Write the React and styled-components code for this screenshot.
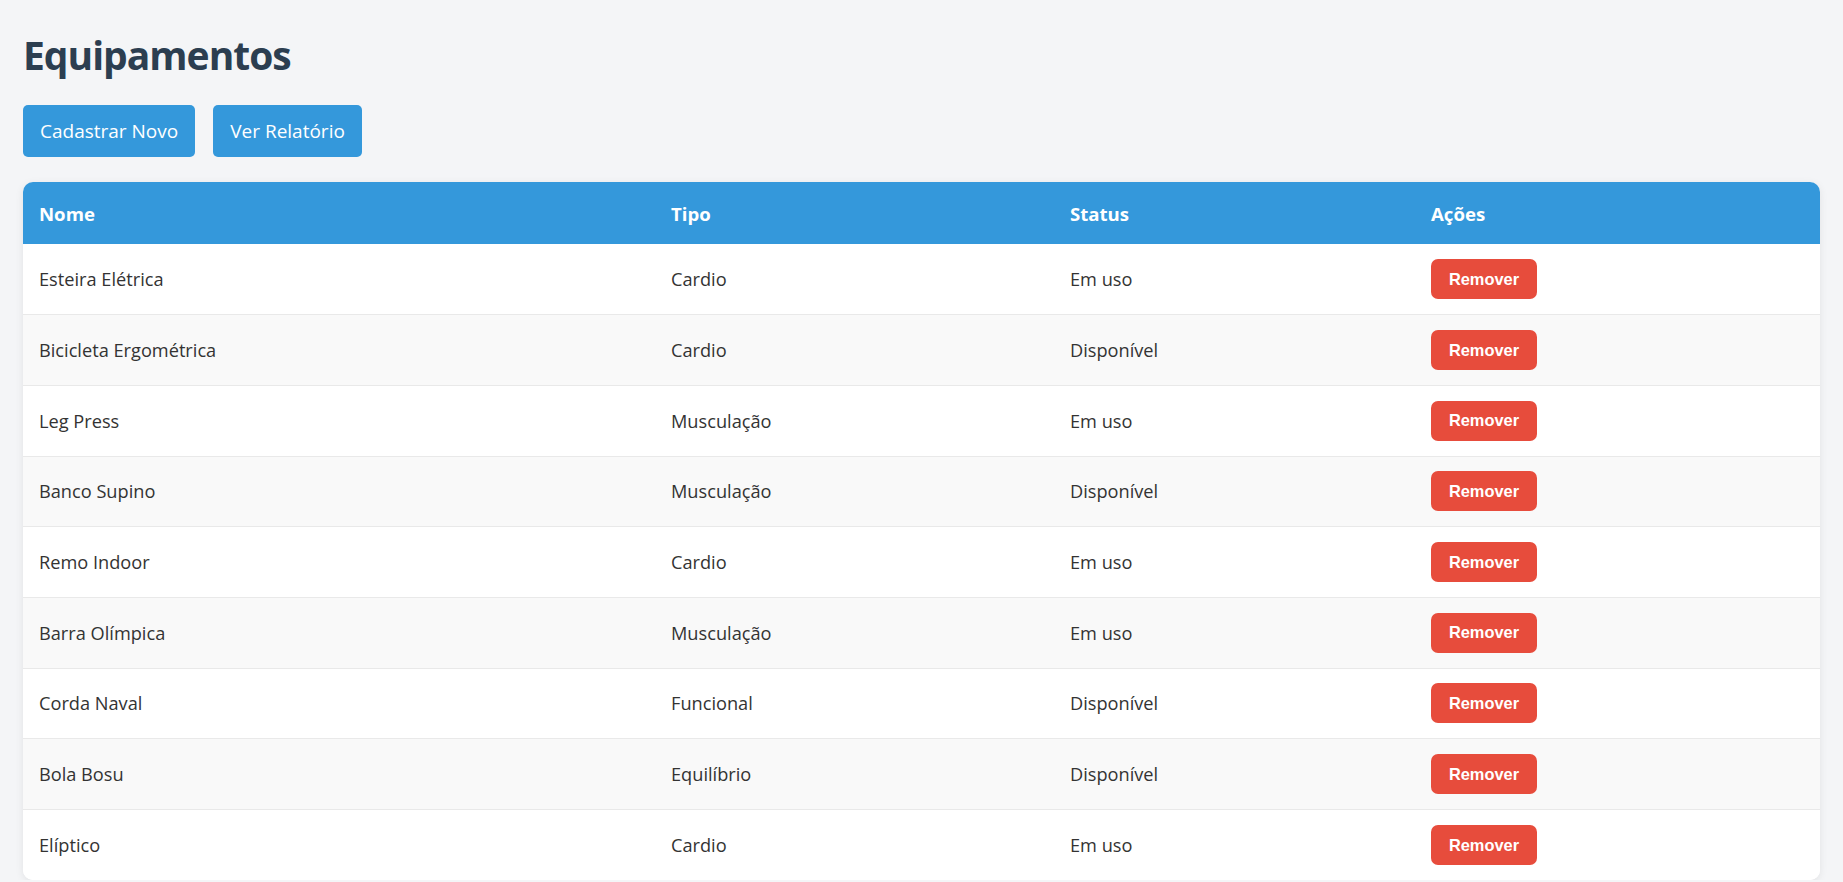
import React from "react";
import styled, { createGlobalStyle } from "styled-components";

const GlobalStyle = createGlobalStyle`
  html, body { margin: 0; padding: 0; }
  body {
    background: #f4f5f7;
    font-family: "Open Sans", "Noto Sans", sans-serif;
    color: #333;
  }
`;

const Page = styled.div`
  padding: 27px 23px 0;
  display: flex;
  flex-direction: column;
`;

const Title = styled.h1`
  margin: 0;
  font-size: 39px;
  line-height: 56px;
  font-weight: 700;
  color: #2c3e50;
  letter-spacing: -1px;
`;

const Toolbar = styled.div`
  display: flex;
  gap: 18px;
  margin-top: 22px;
`;

const PrimaryButton = styled.button`
  background: #3498db;
  color: #fff;
  border: none;
  border-radius: 5px;
  height: 52px;
  padding: 0 17px;
  font-family: "Open Sans", "Noto Sans", sans-serif;
  font-size: 19px;
  cursor: pointer;
`;

const Card = styled.div`
  margin-top: 25px;
  background: #fff;
  border-radius: 10px;
  overflow: hidden;
  box-shadow: 0 2px 8px rgba(0, 0, 0, 0.08);
`;

const Table = styled.table`
  width: 100%;
  border-collapse: collapse;
  table-layout: fixed;
`;

const HeadRow = styled.tr`
  background: #3498db;
  height: 62px;
`;

const Th = styled.th`
  box-sizing: border-box;
  text-align: left;
  color: #fff;
  font-weight: 700;
  font-size: 18.6px;
  padding: 0 16px;
  width: ${(p) => p.$w || "auto"};
`;

const Row = styled.tr`
  height: 70.7px;
  background: ${(p) => (p.$alt ? "#f9f9f9" : "#fff")};
  border-bottom: 1px solid #e9e9e9;
  &:last-child { border-bottom: none; }
`;

const Td = styled.td`
  padding: 0 16px;
  font-size: 18.2px;
  color: #333;
`;

const RemoveButton = styled.button`
  background: #e74c3c;
  color: #fff;
  border: none;
  border-radius: 7px;
  width: 106px;
  height: 40px;
  padding: 0;
  font-family: "Liberation Sans", Arial, sans-serif;
  font-weight: 700;
  font-size: 16.4px;
  cursor: pointer;
`;

const items = [
  ["Esteira Elétrica", "Cardio", "Em uso"],
  ["Bicicleta Ergométrica", "Cardio", "Disponível"],
  ["Leg Press", "Musculação", "Em uso"],
  ["Banco Supino", "Musculação", "Disponível"],
  ["Remo Indoor", "Cardio", "Em uso"],
  ["Barra Olímpica", "Musculação", "Em uso"],
  ["Corda Naval", "Funcional", "Disponível"],
  ["Bola Bosu", "Equilíbrio", "Disponível"],
  ["Elíptico", "Cardio", "Em uso"],
];

export default function App() {
  return (
    <>
      <GlobalStyle />
      <Page>
        <Title>Equipamentos</Title>
        <Toolbar>
          <PrimaryButton>Cadastrar Novo</PrimaryButton>
          <PrimaryButton>Ver Relatório</PrimaryButton>
        </Toolbar>
        <Card>
          <Table>
            <thead>
              <HeadRow>
                <Th $w="632px">Nome</Th>
                <Th $w="399px">Tipo</Th>
                <Th $w="361px">Status</Th>
                <Th>Ações</Th>
              </HeadRow>
            </thead>
            <tbody>
              {items.map(([nome, tipo, status], i) => (
                <Row key={nome} $alt={i % 2 === 1}>
                  <Td>{nome}</Td>
                  <Td>{tipo}</Td>
                  <Td>{status}</Td>
                  <Td>
                    <RemoveButton>Remover</RemoveButton>
                  </Td>
                </Row>
              ))}
            </tbody>
          </Table>
        </Card>
      </Page>
    </>
  );
}
